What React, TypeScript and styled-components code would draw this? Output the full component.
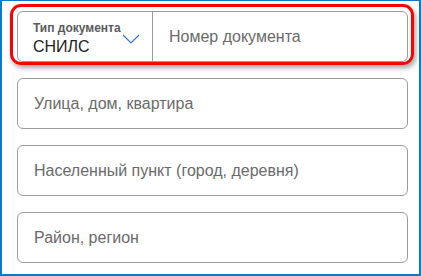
import React from 'react';
import styled, { createGlobalStyle } from 'styled-components';

const GlobalStyle = createGlobalStyle`
  html, body {
    margin: 0;
    padding: 0;
    background: #ffffff;
  }
  * {
    box-sizing: border-box;
  }
`;

const Frame = styled.div`
  width: 421px;
  height: 276px;
  border-style: solid;
  border-color: #0b7bc6;
  border-width: 1px 2px 2px 2px;
  background: #ffffff;
  padding: 10px 11px 0 15px;
  display: flex;
  flex-direction: column;
  gap: 16px;
  font-family: 'Liberation Sans', Arial, sans-serif;
`;

const Highlight = styled.div`
  margin: -7px -6px -3px -7px;
  padding: 4px 3px 0 4px;
  border: 3px solid #ff0000;
  border-radius: 11px;
  box-shadow: 2px 3px 5px rgba(0, 0, 0, 0.35);
`;

const Field = styled.div`
  height: 51px;
  border: 1px solid #9b9b9b;
  border-radius: 6px;
  background: #ffffff;
  display: flex;
  align-items: center;
  padding-left: 16px;
`;

const DocField = styled(Field)`
  padding-left: 0;
  align-items: stretch;
`;

const TypeSelect = styled.div`
  width: 135px;
  border-right: 1px solid #9b9b9b;
  display: flex;
  align-items: center;
  justify-content: space-between;
  padding: 5px 12px 0 15px;
`;

const TypeText = styled.div`
  display: flex;
  flex-direction: column;
`;

const TypeLabel = styled.span`
  font-size: 12px;
  font-weight: bold;
  color: #5b5b5b;
  line-height: 14px;
`;

const TypeValue = styled.span`
  font-size: 16px;
  color: #222222;
  line-height: 20px;
  margin-top: 2px;
`;

const Placeholder = styled.span<{ $indent?: number }>`
  font-size: 16px;
  color: #6a6a6a;
  padding-left: ${p => p.$indent ?? 0}px;
  align-self: center;
`;

const Chevron = () => (
  <svg width="18" height="10" viewBox="0 0 18 10">
    <path d="M1 1 L9 9 L17 1" fill="none" stroke="#2a76c6" strokeWidth="1.1" />
  </svg>
);

const fields = ['Улица, дом, квартира', 'Населенный пункт (город, деревня)', 'Район, регион'];

export default function App() {
  return (
    <>
      <GlobalStyle />
      <Frame>
        <Highlight>
          <DocField>
            <TypeSelect>
              <TypeText>
                <TypeLabel>Тип документа</TypeLabel>
                <TypeValue>СНИЛС</TypeValue>
              </TypeText>
              <Chevron />
            </TypeSelect>
            <Placeholder $indent={16}>Номер документа</Placeholder>
          </DocField>
        </Highlight>
        {fields.map(f => (
          <Field key={f}>
            <Placeholder>{f}</Placeholder>
          </Field>
        ))}
      </Frame>
    </>
  );
}
